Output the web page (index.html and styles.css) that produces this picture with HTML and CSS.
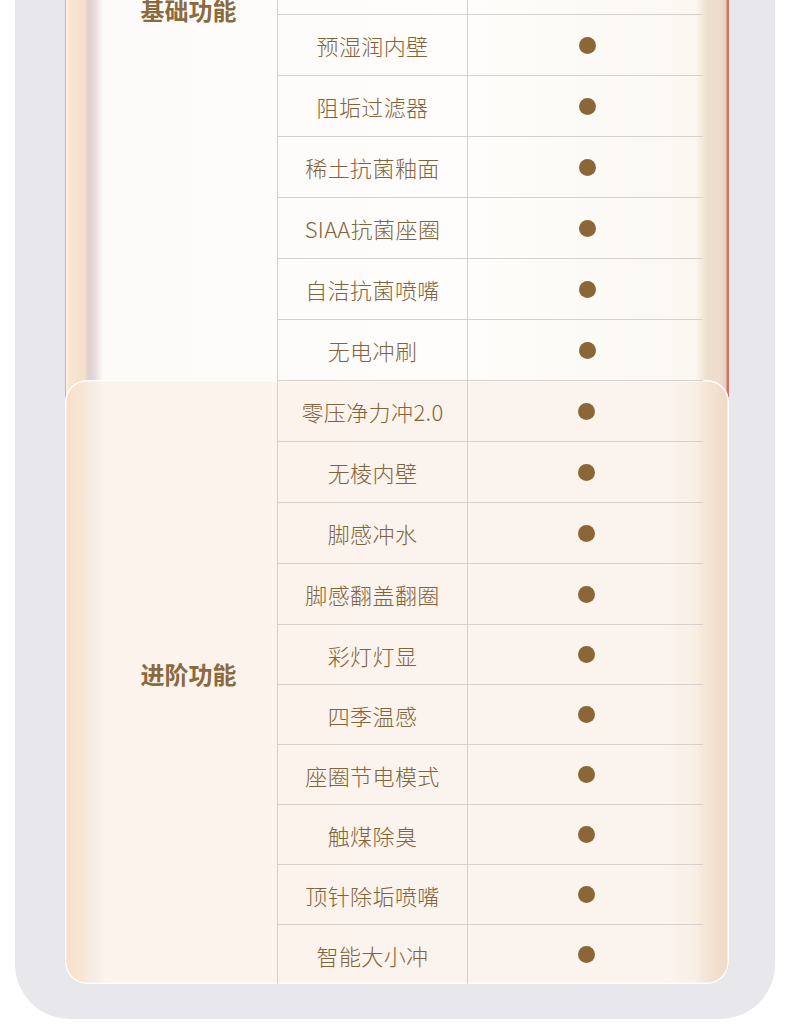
FILE: index.html
```html
<!DOCTYPE html>
<html lang="zh-CN">
<head>
<meta charset="utf-8">
<title>功能对比</title>
<link rel="stylesheet" href="styles.css">
</head>
<body>
<div class="panel">
  <div class="frame">
    <div class="section basic">
      <div class="label">基础功能</div>
      <div class="name">即热恒温</div><div class="mark"><span class="dot"></span></div>
      <div class="name">暖风烘干</div><div class="mark"><span class="dot"></span></div>
      <div class="name">座圈加热</div><div class="mark"><span class="dot"></span></div>
      <div class="name">臀部清洗</div><div class="mark"><span class="dot"></span></div>
      <div class="name">女性清洗</div><div class="mark"><span class="dot"></span></div>
      <div class="name">缓降盖板</div><div class="mark"><span class="dot"></span></div>
      <div class="name">预湿润内壁</div><div class="mark"><span class="dot"></span></div>
      <div class="name">阻垢过滤器</div><div class="mark"><span class="dot"></span></div>
      <div class="name">稀土抗菌釉面</div><div class="mark"><span class="dot"></span></div>
      <div class="name">SIAA抗菌座圈</div><div class="mark"><span class="dot"></span></div>
      <div class="name">自洁抗菌喷嘴</div><div class="mark"><span class="dot"></span></div>
      <div class="name">无电冲刷</div><div class="mark"><span class="dot"></span></div>
    </div>
    <div class="section advanced">
      <div class="label">进阶功能</div>
      <div class="name">零压净力冲2.0</div><div class="mark"><span class="dot"></span></div>
      <div class="name">无棱内壁</div><div class="mark"><span class="dot"></span></div>
      <div class="name">脚感冲水</div><div class="mark"><span class="dot"></span></div>
      <div class="name">脚感翻盖翻圈</div><div class="mark"><span class="dot"></span></div>
      <div class="name">彩灯灯显</div><div class="mark"><span class="dot"></span></div>
      <div class="name">四季温感</div><div class="mark"><span class="dot"></span></div>
      <div class="name">座圈节电模式</div><div class="mark"><span class="dot"></span></div>
      <div class="name">触煤除臭</div><div class="mark"><span class="dot"></span></div>
      <div class="name">顶针除垢喷嘴</div><div class="mark"><span class="dot"></span></div>
      <div class="name">智能大小冲</div><div class="mark"><span class="dot"></span></div>
    </div>
  </div>
</div>
</body>
</html>
```
FILE: styles.css
```css
html, body {
  margin: 0;
  padding: 0;
  background: #ffffff;
  overflow: hidden;
}
body {
  font-family: "Noto Sans CJK SC", "Noto Sans", sans-serif;
  color: #83633a;
}
.panel {
  margin: -352px 15px 0 15px;
  background: #e8e8ec;
  border-radius: 0 0 55px 55px;
  padding: 0 46px 35px 50px;
}
.frame {
  width: 664px;
  border-radius: 0 0 22px 22px;
  background: linear-gradient(to right,
    #eea58f 0, #eea58f 1px,
    #fdf0e2 1px, #fdf0e2 3px,
    #f8e5d3 3px, #f5dfcb 20px,
    #e8d5c6 22px, #ddd0cf 24px,
    #e6dcdb 30px, #fdfbf9 38px,
    #fefdfb 60%, #fbf8f2 630px,
    #f5eadd 637px, #efdfcf 641px,
    #eedccd 655px, #e6cfc4 661px,
    #d8705f 662px, #d8705f 664px);
}
.section {
  display: grid;
  grid-template-columns: 177px 190px 236px;
  padding: 0 26px 0 35px;
}
.basic {
  grid-template-rows: repeat(12, 61px);
}
.advanced {
  grid-template-rows: repeat(4, 61px) repeat(6, 60px);
  border-radius: 22px;
  background: linear-gradient(to right,
    #f6dfcb 0, #f8e6d6 18px, #f8ebe1 24px,
    #f7ede6 30px, #fbf3ec 40px,
    #fbf4ee 600px, #f8eee4 632px,
    #f4e4d5 642px, #f0dbc9 660px, #f0dbc9 664px);
  box-shadow: inset 0 0 0 1.5px rgba(255, 255, 255, 0.95);
}
.label {
  grid-column: 1;
  grid-row: 1 / -1;
  display: flex;
  align-items: center;
  justify-content: center;
  font-size: 24px;
  font-weight: 700;
  color: #8a6a3e;
  padding-bottom: 18px;
}
.basic .label {
  padding-bottom: 10px;
}
.name, .mark {
  display: flex;
  align-items: center;
  justify-content: center;
  border-left: 1px solid #d6d1cd;
  border-top: 1px solid #d6d1cd;
  box-sizing: border-box;
}
.name {
  font-size: 22px;
  font-weight: 300;
  letter-spacing: 0.4px;
}
.basic .name:nth-child(2), .basic .mark:nth-child(3) {
  border-top: none;
}
.dot {
  width: 17px;
  height: 17px;
  border-radius: 50%;
  background: #8b6637;
}
.advanced .mark {
  padding-left: 2px;
}
.basic .mark {
  padding-left: 4px;
}
```
